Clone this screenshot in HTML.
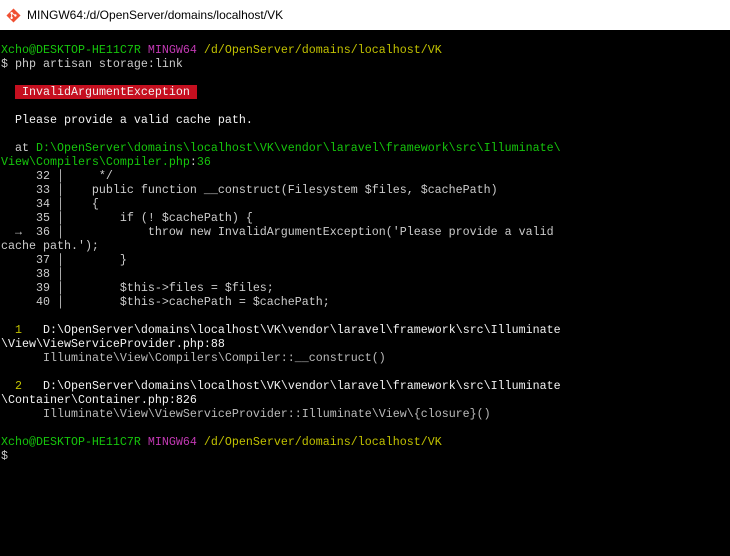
<!DOCTYPE html>
<html><head><meta charset="utf-8"><style>
html,body{margin:0;padding:0;background:#000;width:730px;height:556px;overflow:hidden}
.title{position:absolute;left:0;top:0;width:730px;height:30px;background:#fff;font-family:"Liberation Sans",sans-serif;font-size:12px;color:#000}
.title span{position:absolute;left:27px;top:8px}
pre{position:absolute;left:1px;top:43px;margin:0;font-family:"Liberation Mono","DejaVu Sans Mono",monospace;font-size:11.667px;line-height:14px;color:#cccccc;white-space:pre}
.g{color:#16c60c}.m{color:#c239b3}.y{color:#c1c100}.w{color:#f2f2f2}.d{color:#bbbbbb}
.r{background:#c50f1f;color:#f2f2f2}
</style></head><body>
<div class="title"><svg style="position:absolute;left:6px;top:8px" width="15" height="15" viewBox="0 0 16 16"><path d="M8 0.5L15.5 8 8 15.5 0.5 8z" fill="#f05033"/><circle cx="6" cy="5.5" r="1.3" fill="#fff"/><circle cx="6" cy="10.5" r="1.3" fill="#fff"/><circle cx="10" cy="8" r="1.3" fill="#fff"/><path d="M6 5.5V10.5M6 5.5L10 8" stroke="#fff" stroke-width="1"/></svg><span>MINGW64:/d/OpenServer/domains/localhost/VK</span></div>
<pre><span class="g">Xcho@DESKTOP-HE11C7R</span> <span class="m">MINGW64</span> <span class="y">/d/OpenServer/domains/localhost/VK</span>
$ php artisan storage:link

  <span class="r"> InvalidArgumentException </span>

  <span class="w">Please provide a valid cache path.</span>

  at <span class="g">D:\OpenServer\domains\localhost\VK\vendor\laravel\framework\src\Illuminate\</span>
<span class="g">View\Compilers\Compiler.php</span>:<span class="g">36</span>
     32 │     */
     33 │    public function __construct(Filesystem $files, $cachePath)
     34 │    {
     35 │        if (! $cachePath) {
  →  36 │            throw new InvalidArgumentException('Please provide a valid
cache path.');
     37 │        }
     38 │
     39 │        $this->files = $files;
     40 │        $this->cachePath = $cachePath;

  <span class="y">1</span>   <span class="w">D:\OpenServer\domains\localhost\VK\vendor\laravel\framework\src\Illuminate</span>
<span class="w">\View\ViewServiceProvider.php:88</span>
      <span class="d">Illuminate\View\Compilers\Compiler::__construct()</span>

  <span class="y">2</span>   <span class="w">D:\OpenServer\domains\localhost\VK\vendor\laravel\framework\src\Illuminate</span>
<span class="w">\Container\Container.php:826</span>
      <span class="d">Illuminate\View\ViewServiceProvider::Illuminate\View\{closure}()</span>

<span class="g">Xcho@DESKTOP-HE11C7R</span> <span class="m">MINGW64</span> <span class="y">/d/OpenServer/domains/localhost/VK</span>
$</pre>
</body></html>
